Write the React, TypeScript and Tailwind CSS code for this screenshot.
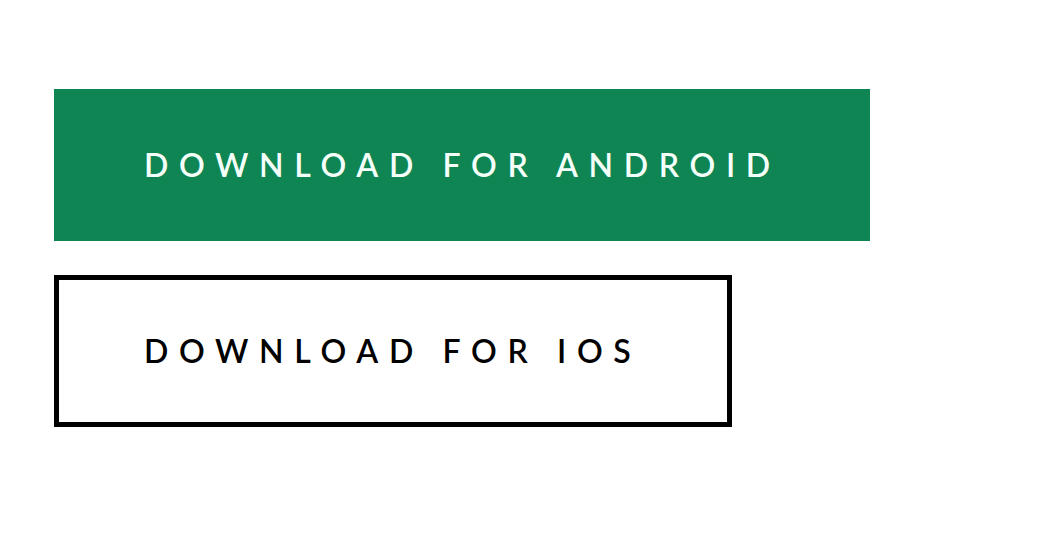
import React from "react";

const App = () => {
	return (
		<div className="min-h-screen bg-white pt-[89px] pl-[54px] font-['Lato','Liberation_Sans',sans-serif]">
			<div className="flex flex-col gap-[34px]">
				<a
					href="#"
					className="flex items-center w-[816px] h-[152px] pl-[90px] bg-[#0e8553] text-[#f4fff9] text-[32px] font-semibold tracking-[0.333em] leading-none"
				>
					DOWNLOAD FOR ANDROID
				</a>
				<a
					href="#"
					className="flex items-center w-[678px] h-[152px] pl-[85px] border-[5px] border-black text-black text-[32px] font-semibold tracking-[0.333em] leading-none"
				>
					DOWNLOAD FOR IOS
				</a>
			</div>
		</div>
	);
};

export default App;
